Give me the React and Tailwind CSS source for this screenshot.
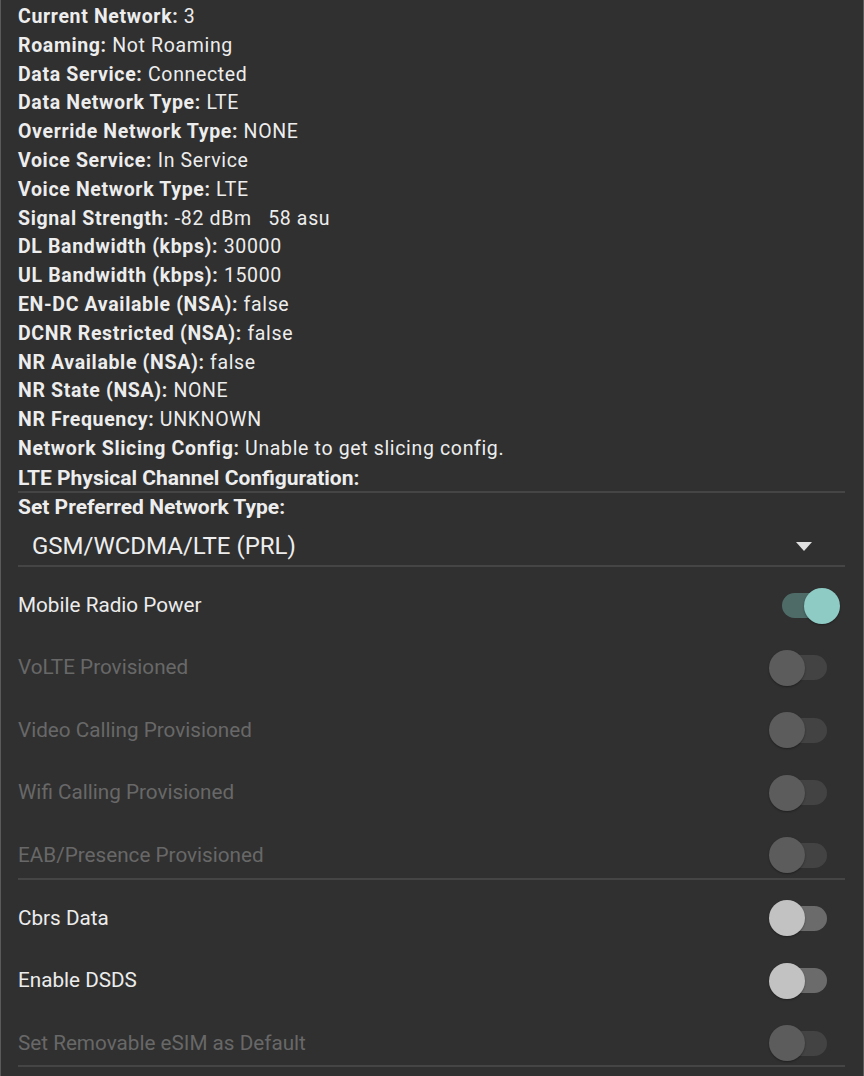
import React from 'react';

const info = [
  ['Current Network:', '3'],
  ['Roaming:', 'Not Roaming'],
  ['Data Service:', 'Connected'],
  ['Data Network Type:', 'LTE'],
  ['Override Network Type:', 'NONE'],
  ['Voice Service:', 'In Service'],
  ['Voice Network Type:', 'LTE'],
  ['Signal Strength:', '-82 dBm   58 asu'],
  ['DL Bandwidth (kbps):', '30000'],
  ['UL Bandwidth (kbps):', '15000'],
  ['EN-DC Available (NSA):', 'false'],
  ['DCNR Restricted (NSA):', 'false'],
  ['NR Available (NSA):', 'false'],
  ['NR State (NSA):', 'NONE'],
  ['NR Frequency:', 'UNKNOWN'],
  ['Network Slicing Config:', 'Unable to get slicing config.'],
];

function Toggle({ on, disabled }) {
  const track = on ? 'bg-[#4e6b68]' : disabled ? 'bg-[#434343]' : 'bg-[#6b6b6b]';
  const thumb = on ? 'bg-[#8ecbc5] ml-[22px]' : disabled ? 'bg-[#5c5c5c] -ml-[13px]' : 'bg-[#c2c2c2] -ml-[13px]';
  return (
    <div className="relative w-[45px] h-[25px] mr-[18px]">
      <div className={`absolute inset-0 rounded-full ${track}`} />
      <div className={`absolute -top-[5.5px] w-[36px] h-[36px] rounded-full shadow-[0_1px_2px_rgba(0,0,0,0.35)] ${thumb}`} />
    </div>
  );
}

function SwitchRow({ label, on, disabled }) {
  return (
    <div className="flex items-center justify-between h-[62.4px]">
      <span className={`text-[20.7px] ${disabled ? 'text-[#686868]' : 'text-[#ececec]'}`}>{label}</span>
      <Toggle on={on} disabled={disabled} />
    </div>
  );
}

export default function App() {
  return (
    <div
      className="w-[864px] h-[1076px] overflow-hidden bg-[#303030] border-l border-r border-[#5a5a5a] text-[#ededed]"
      style={{ fontFamily: 'Roboto, "Noto Sans", sans-serif' }}
    >
      <div className="pl-[17px] pr-[18px] pt-[3px]">
        {info.map(([k, v]) => (
          <div key={k} className="text-[19.5px] tracking-[0.65px] leading-[28.8px] whitespace-pre">
            <span className="font-bold">{k}</span> {v}
          </div>
        ))}
        <div className="text-[21px] leading-[28.8px] font-bold whitespace-nowrap">
          LTE Physical Channel Configuration:
        </div>
        <div className="border-t-2 border-[#454545] -mt-[2px]" />
        <div className="text-[21px] leading-[28.8px] font-bold whitespace-nowrap">
          Set Preferred Network Type:
        </div>
        <div className="flex items-center justify-between h-[44px] pt-[6px]">
          <span className="ml-[14px] text-[24px] whitespace-nowrap">GSM/WCDMA/LTE (PRL)</span>
          <svg width="16" height="9" viewBox="0 0 16 9" className="mr-[33px]">
            <path d="M0 0 L16 0 L8 9 Z" fill="#e0e0e0" />
          </svg>
        </div>
        <div className="border-t-2 border-[#454545]" />
        <div className="mt-[7px]">
          <SwitchRow label="Mobile Radio Power" on />
          <SwitchRow label="VoLTE Provisioned" disabled />
          <SwitchRow label="Video Calling Provisioned" disabled />
          <SwitchRow label="Wifi Calling Provisioned" disabled />
          <SwitchRow label="EAB/Presence Provisioned" disabled />
        </div>
        <div className="border-t-2 border-[#454545] -mt-[8px]" />
        <div className="mt-[7px]">
          <SwitchRow label="Cbrs Data" />
          <SwitchRow label="Enable DSDS" />
          <SwitchRow label="Set Removable eSIM as Default" disabled />
        </div>
        <div className="border-t-2 border-[#454545] -mt-[9px]" />
      </div>
    </div>
  );
}
